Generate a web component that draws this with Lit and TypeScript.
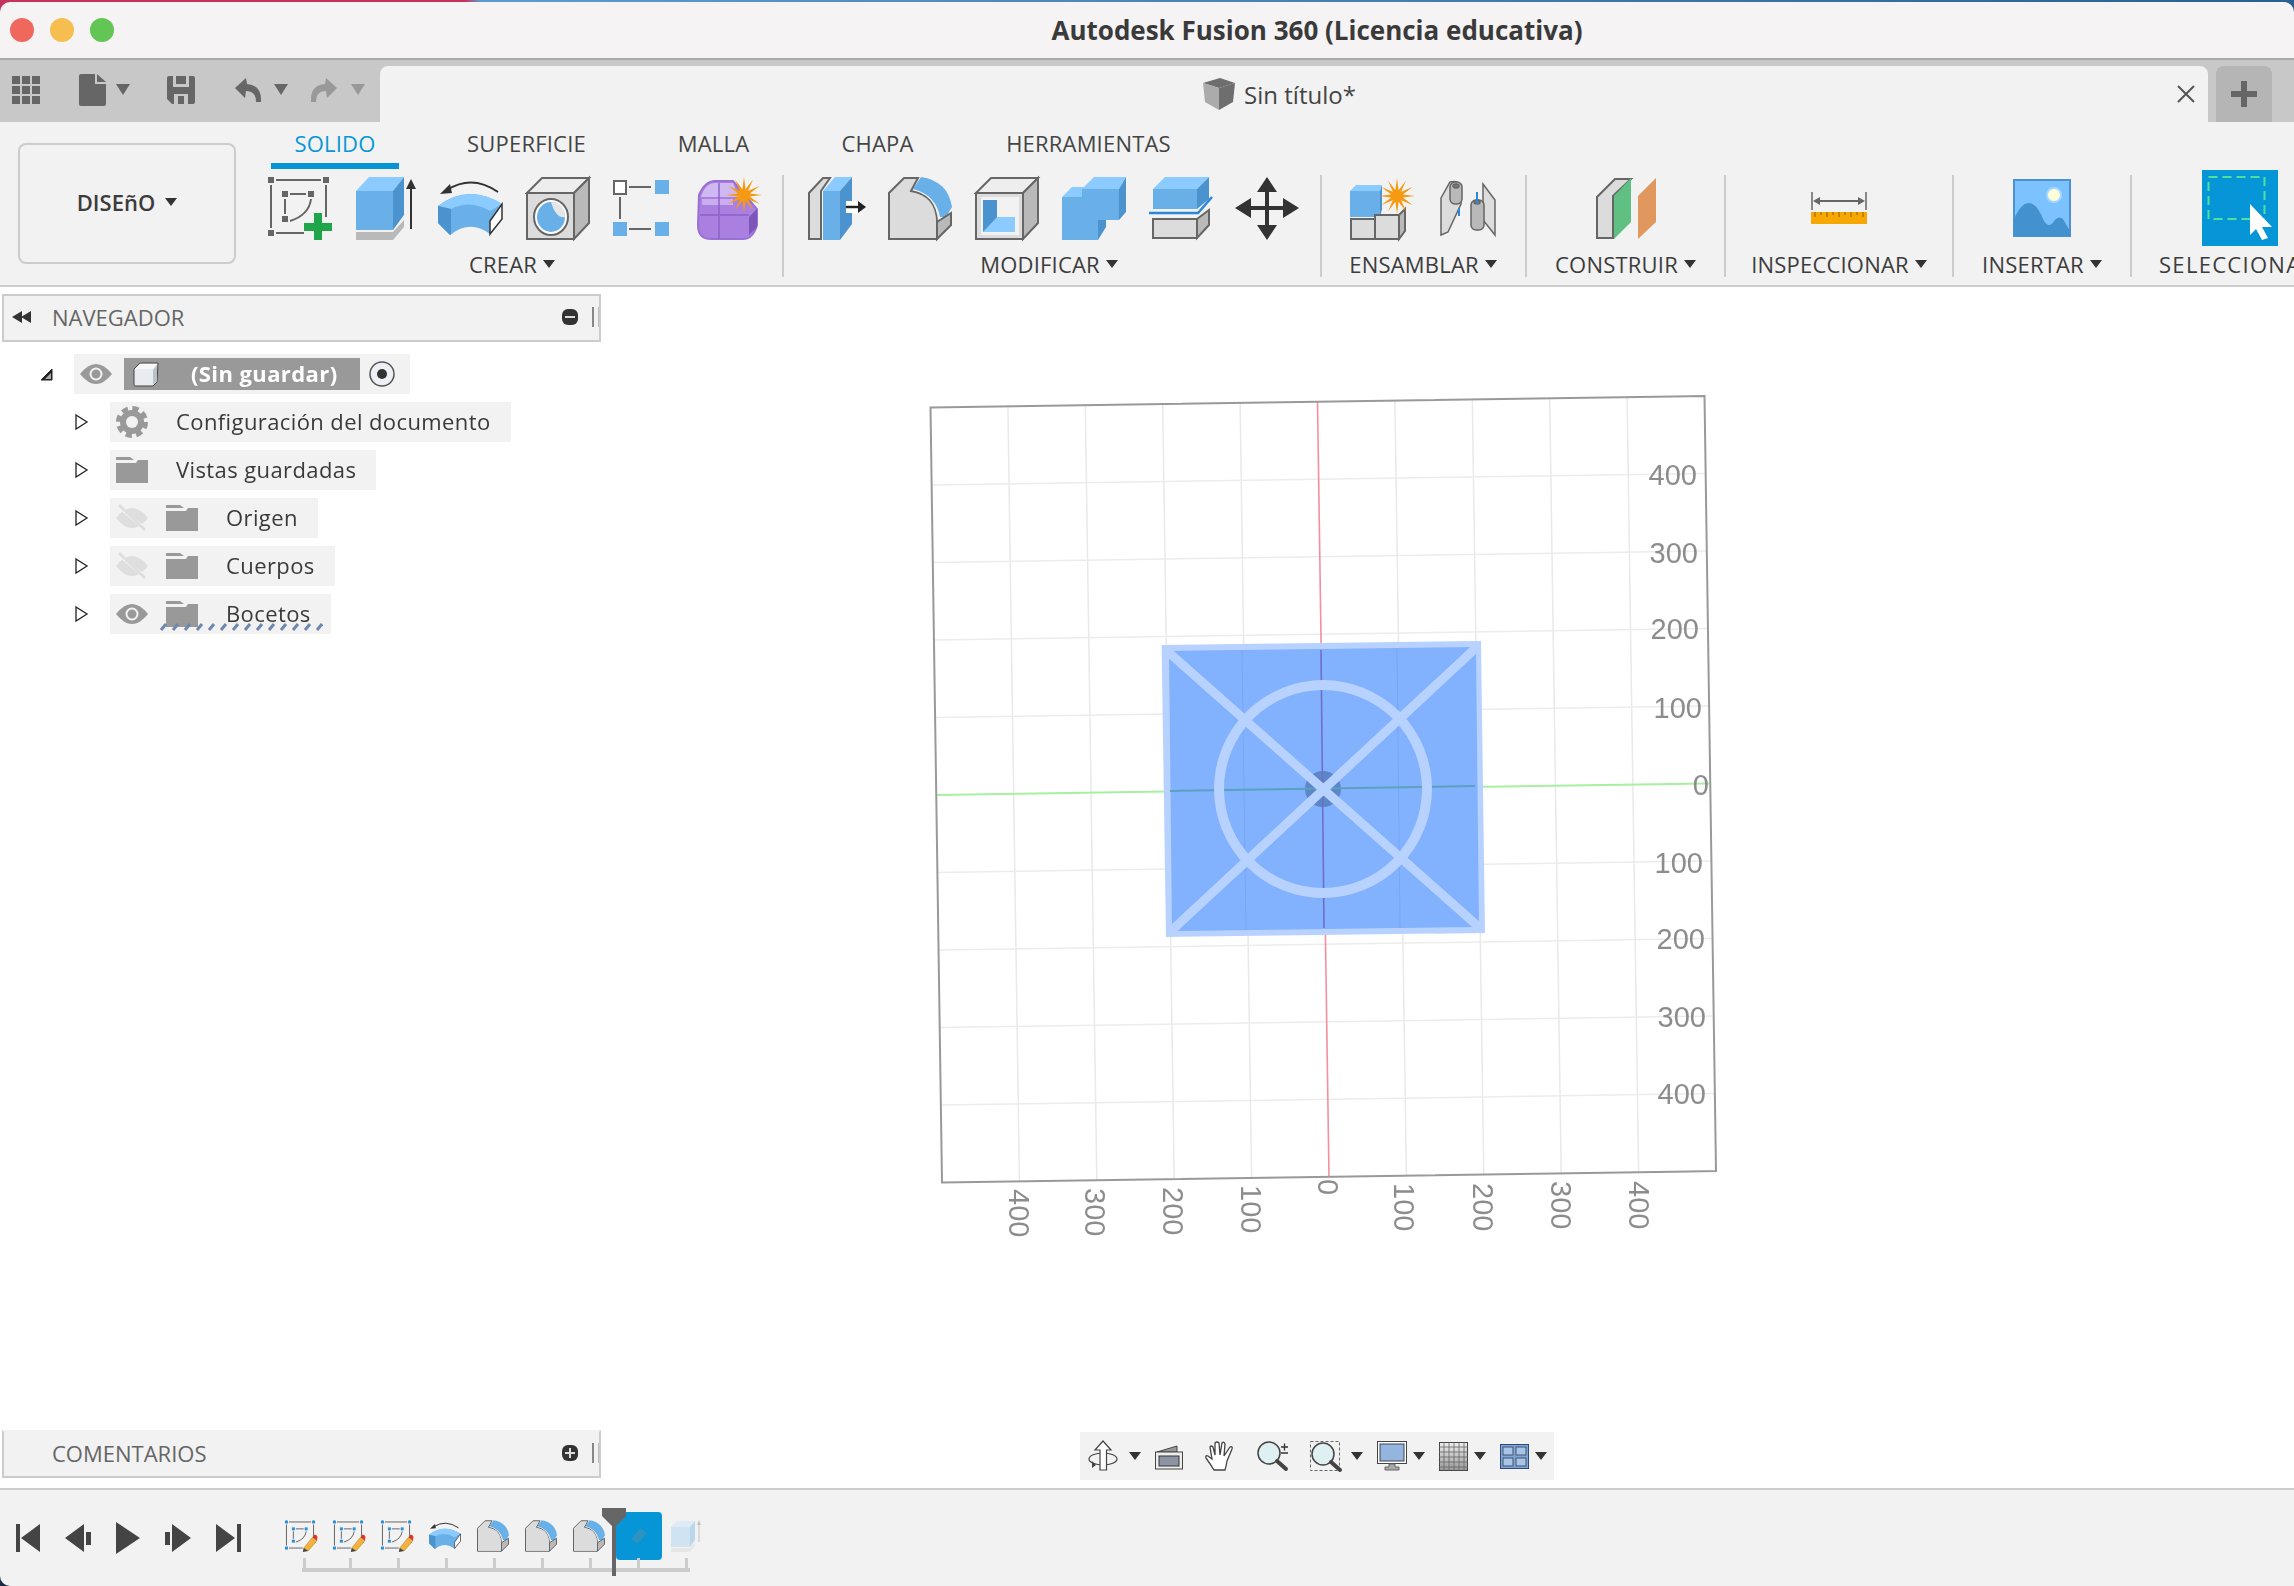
import { LitElement, html, css, svg, TemplateResult } from 'lit';
import { customElement } from 'lit/decorators.js';

type Icon = { w: number; h: number; body: unknown };

const BLUE_TOP = '#8ccbff';
const BLUE_MID = '#6ab0e8';
const BLUE_DARK = '#4a93cf';
const GRAY_FRONT = '#dcdcdc';
const GRAY_SIDE = '#b9b9b9';
const LINE = '#666';

function star(cx: number, cy: number, r1: number, r2: number, n: number) {
  const pts: string[] = [];
  for (let i = 0; i < n * 2; i++) {
    const r = i % 2 ? r2 : r1;
    const a = (Math.PI * i) / n - Math.PI / 2;
    pts.push(`${(cx + r * Math.cos(a)).toFixed(1)},${(cy + r * Math.sin(a)).toFixed(1)}`);
  }
  return pts.join(' ');
}

function ico(i: Icon, w = i.w, h = i.h): TemplateResult {
  return html`<svg class="ico" width=${w} height=${h} viewBox="0 0 ${i.w} ${i.h}">${i.body}</svg>`;
}

const sketchFrame = (hc: string) => svg`
  <g fill=${hc}>
    <rect x="0" y="0" width="6" height="6"/><rect x="55" y="0" width="6" height="6"/>
    <rect x="0" y="53" width="6" height="6"/><rect x="14" y="14" width="6" height="6"/>
    <rect x="40" y="14" width="6" height="6"/><rect x="14" y="39" width="6" height="6"/>
  </g>
  <g fill="none" stroke=${LINE} stroke-width="2">
    <path d="M8 3H53M3 8V51M58 8V40M8 56H36M22 17H38M17 22V37M43 22Q41 38 22 44"/>
  </g>`;

const sketch: Icon = {
  w: 65, h: 63,
  body: svg`${sketchFrame(LINE)}<path fill="#1fa64a" d="M46 36H54V46H64V54H54V63H46V54H36V46H46Z"/>`,
};

const sketchEdit: Icon = {
  w: 65, h: 63,
  body: svg`${sketchFrame('#2c8fd8')}
    <path fill="#f2b23e" stroke="#a87a20" stroke-width="1" d="M38 56L56 34L65 41L47 62Z"/>
    <path fill="#e0352b" d="M56 34L60 29Q64 28 66 33L65 41Z"/>
    <path fill="#444" d="M38 56L47 62L36 64Z"/>`,
};

const extrude: Icon = {
  w: 60, h: 63,
  body: svg`
    <path fill=${BLUE_TOP} d="M0 14L13 0H48L37 14Z"/>
    <rect fill=${BLUE_MID} x="0" y="14" width="37" height="39"/>
    <path fill=${BLUE_DARK} d="M37 14L48 0V38L37 53Z"/>
    <path fill=${GRAY_SIDE} d="M0 55H37L48 43V50L37 63H0Z"/>
    <path fill="none" stroke="#333" stroke-width="2" d="M55 52V8"/>
    <path fill="#333" d="M55 2L60 12H50Z"/>`,
};

const revolve: Icon = {
  w: 65, h: 55,
  body: svg`
    <path fill=${BLUE_MID} d="M0 25Q30 2 64 23L52 40V53Q32 38 12 54L0 42Z"/>
    <path fill=${BLUE_TOP} d="M0 25Q32 2 64 23L52 30Q32 18 13 28Z"/>
    <path fill=${BLUE_DARK} d="M0 25L13 28V54L12 54L0 42Z"/>
    <path fill="#fff" stroke="#333" stroke-width="1.5" d="M52 40L64 23V38L52 53Z"/>
    <path fill="none" stroke="#333" stroke-width="2" d="M60 11Q34 -7 9 9"/>
    <path fill="#333" d="M2 13L12 3L14 12Z"/>`,
};

const grayBox = svg`
  <path fill=${GRAY_FRONT} stroke=${LINE} stroke-width="2" d="M1 16H48V62H1Z"/>
  <path fill="#eee" stroke=${LINE} stroke-width="2" d="M1 16L16 1H63L48 16Z"/>
  <path fill=${GRAY_SIDE} stroke=${LINE} stroke-width="2" d="M48 16L63 1V46L48 62Z"/>`;

const hole: Icon = {
  w: 65, h: 63,
  body: svg`${grayBox}
    <ellipse cx="25" cy="40" rx="17" ry="18" fill="#fff" stroke=${LINE} stroke-width="2"/>
    <ellipse cx="25" cy="40" rx="14" ry="15" fill=${BLUE_MID}/>
    <path fill="#e6e6e6" d="M25 25Q39 26 39 40Q30 42 25 25Z"/>`,
};

// drawn 56 wide, the spare 5 keeps the spacing of the row
const pattern: Icon = {
  w: 61, h: 56,
  body: svg`
    <rect x="1" y="1" width="12" height="13" fill="#fff" stroke=${LINE} stroke-width="2"/>
    <g fill=${BLUE_MID}><rect x="42" y="0" width="14" height="14"/>
    <rect x="0" y="42" width="14" height="14"/><rect x="42" y="42" width="14" height="14"/></g>
    <path stroke=${LINE} stroke-width="2" d="M16 7H38M7 17V39M16 49H38"/>`,
};

const form: Icon = {
  w: 65, h: 63,
  body: svg`
    <path fill="#a97fe0" stroke="#9a70d4" stroke-width="2" d="M2 18Q8 4 18 4H36L60 32V48Q56 62 46 62H14Q1 62 1 48Z"/>
    <path fill="#d0b8f2" d="M4 20Q8 6 18 6H36L42 20Z"/>
    <path fill="#c9adef" d="M5 22H36V28H5Z"/>
    <path fill="#7d55b8" d="M52 40L60 32V50L52 58Z"/>
    <path fill="none" stroke="#8d63c8" stroke-width="1.5" d="M22 6V62M3 38H52"/>
    <polygon fill="#f59a12" points=${star(47, 18, 18, 6, 12)}/>`,
};

const pressPull: Icon = {
  w: 58, h: 63,
  body: svg`
    <path fill=${GRAY_FRONT} stroke=${LINE} stroke-width="2" d="M1 62V16L15 1H22L13 14V62Z"/>
    <path fill=${BLUE_TOP} d="M15 14L27 0H44L32 14Z"/>
    <rect fill=${BLUE_MID} x="15" y="14" width="17" height="49"/>
    <path fill=${BLUE_DARK} d="M32 14L44 0V47L32 63Z"/>
    <rect x="38" y="24" width="14" height="12" fill="#fff"/>
    <path stroke="#222" stroke-width="2.5" d="M38 30H52"/><path fill="#222" d="M50 24L58 30L50 36Z"/>`,
};

const fillet: Icon = {
  w: 64, h: 63,
  body: svg`
    <path fill=${GRAY_FRONT} stroke=${LINE} stroke-width="2" d="M1 62V16L16 1H30L23 14Q47 18 49 44V62Z"/>
    <path fill=${GRAY_FRONT} d="M2 16H23Q47 18 48 44V61H2Z"/>
    <path fill=${BLUE_MID} d="M33 0Q60 4 64 30L58 40H52Q48 18 25 12Z"/>
    <path fill=${GRAY_SIDE} stroke=${LINE} stroke-width="2" d="M49 62V45L63 36V48Z"/>`,
};

const shell: Icon = {
  w: 65, h: 63,
  body: svg`${grayBox}
    <rect x="6" y="20" width="38" height="38" fill="#f2f2f2"/>
    <rect x="8" y="23" width="14" height="32" fill=${BLUE_DARK}/>
    <path fill=${BLUE_TOP} d="M8 55L22 40H40V55Z"/>`,
};

const combine: Icon = {
  w: 64, h: 63,
  body: svg`
    <path fill=${BLUE_TOP} d="M0 20L10 10H26L20 20Z"/><path fill=${BLUE_TOP} d="M20 12L32 0H64L57 12Z"/>
    <rect fill=${BLUE_MID} x="20" y="12" width="37" height="31"/>
    <rect fill=${BLUE_MID} x="0" y="20" width="36" height="43"/>
    <path fill=${BLUE_DARK} d="M57 12L64 0V35L57 43ZM36 43H44V50L36 63Z"/>`,
};

const split: Icon = {
  w: 64, h: 62,
  body: svg`
    <path fill=${BLUE_TOP} d="M4 12L16 0H60L48 12Z"/>
    <rect fill=${BLUE_MID} x="4" y="12" width="44" height="20"/>
    <path fill=${BLUE_DARK} d="M48 12L60 0V22L48 32Z"/>
    <path fill="none" stroke="#2b88d8" stroke-width="2.5" d="M0 36H49L63 20"/>
    <rect x="4" y="42" width="44" height="19" fill=${GRAY_FRONT} stroke=${LINE} stroke-width="2"/>
    <path fill=${GRAY_SIDE} stroke=${LINE} stroke-width="2" d="M48 42L60 33V48L48 61Z"/>`,
};

const move: Icon = {
  w: 64, h: 63,
  body: svg`
    <g fill="#333">
      <path d="M32 0L42 15H22ZM32 63L42 48H22ZM0 31L16 21V41ZM64 31L48 21V41Z"/>
      <rect x="30" y="12" width="4" height="38"/><rect x="13" y="29" width="38" height="4"/>
    </g>`,
};

const assemble: Icon = {
  w: 64, h: 63,
  body: svg`
    <path fill=${BLUE_TOP} d="M0 14L6 8H32L30 14Z"/>
    <rect fill=${BLUE_MID} x="0" y="14" width="30" height="26"/>
    <path fill=${BLUE_DARK} d="M30 14L32 8V32L30 40Z"/>
    <g stroke=${LINE} stroke-width="2">
      <rect x="1" y="42" width="24" height="20" fill=${GRAY_FRONT}/>
      <rect x="25" y="38" width="24" height="24" fill=${GRAY_FRONT}/>
      <path fill=${GRAY_SIDE} d="M49 38L55 32V54L49 62Z"/>
    </g>
    <polygon fill="#f59a12" points=${star(47, 19, 18, 6, 12)}/>`,
};

const joint: Icon = {
  w: 56, h: 56,
  body: svg`
    <g stroke=${LINE} stroke-width="1.5">
      <path fill=${GRAY_FRONT} d="M1 18L10 2Q18 0 21 6V24L8 52L1 55Z"/>
      <rect x="10" y="2" width="12" height="22" rx="5" fill=${GRAY_SIDE}/>
      <ellipse cx="16" cy="6" rx="3" ry="2" fill="#777"/>
      <path fill=${GRAY_FRONT} d="M43 4L55 20V55L43 40Z"/>
      <rect x="31" y="20" width="13" height="30" rx="5" fill=${GRAY_SIDE}/>
      <ellipse cx="37" cy="22" rx="3" ry="2" fill="#777"/>
    </g>
    <path stroke="#2b88d8" stroke-width="2" d="M37 12V24M19 28V36"/>`,
};

const construct: Icon = {
  w: 60, h: 61,
  body: svg`
    <path fill=${GRAY_FRONT} stroke=${LINE} stroke-width="2" d="M1 60V19L19 1H35L17 18V60Z"/>
    <path fill="#5fc082" d="M18 18L35 0V44L18 61Z"/>
    <path fill="#e0985f" d="M42 18L60 0V44L42 61Z"/>`,
};

const inspect: Icon = {
  w: 56, h: 32,
  body: svg`
    <path stroke=${LINE} stroke-width="1.5" d="M1 0V18M55 0V18"/>
    <path stroke=${LINE} stroke-width="2" d="M6 9H50"/>
    <path fill=${LINE} d="M2 9L9 5V13ZM54 9L47 5V13Z"/>
    <rect y="20" width="56" height="12" fill="#f7a800"/>
    <path stroke="#8a6000" stroke-width="1" d="M4 20V25M10 20V23M16 20V25M22 20V23M28 20V25M34 20V23M40 20V25M46 20V23M52 20V25"/>`,
};

const insert: Icon = {
  w: 58, h: 58,
  body: svg`
    <rect x="1" y="1" width="56" height="56" fill="#7cc2ff" stroke=${BLUE_DARK} stroke-width="2"/>
    <ellipse cx="41" cy="16" rx="7" ry="7" fill="#fdfdd8" stroke="#a8d8ff" stroke-width="2"/>
    <path fill="#4392cf" d="M1 40Q8 24 16 24Q24 24 31 42Q36 50 41 42Q46 36 50 40L57 52V57H1Z"/>`,
};

const select: Icon = {
  w: 76, h: 76,
  body: svg`
    <rect width="76" height="76" fill="#0696d7"/>
    <rect x="6.5" y="7" width="56" height="42" fill="none" stroke="#4fe0a0" stroke-width="2" stroke-dasharray="9 5"/>
    <path fill="#fff" d="M48 34L70 57L60 57L66 68L60 70L54 59L48 65Z"/>`,
};

const ghost: Icon = {
  w: 30, h: 32,
  body: svg`
    <path fill="#dcebf5" d="M0 7L6 1H24L19 7Z"/><rect fill="#cfe3f2" y="7" width="19" height="20"/>
    <path fill="#b9d6ea" d="M19 7L24 1V20L19 27Z"/><path fill="#e6e6e6" d="M0 28H19L24 22V26L19 32H0Z"/>
    <path stroke="#c4c4c4" stroke-width="1" d="M28 22V3"/><path fill="#c4c4c4" d="M28 0L30 5H26Z"/>`,
};

const gridApp: Icon = {
  w: 28, h: 28,
  body: svg`<g fill="#666">
    ${[0, 10, 20].map((y) => [0, 10, 20].map((x) => svg`<rect x=${x} y=${y} width="8" height="8"/>`))}
  </g>`,
};

const fileIcon: Icon = { w: 27, h: 32, body: svg`<path fill="#666" d="M2 0H16V10H27V30Q27 32 25 32H2Q0 32 0 30V2Q0 0 2 0ZM18 0L27 8H18Z"/>` };

const saveIcon: Icon = {
  w: 28, h: 28,
  body: svg`<path fill="#666" d="M2 0H26Q28 0 28 2V26Q28 28 26 28H5L0 23V2Q0 0 2 0Z"/>
    <path fill="#c8c8c8" d="M6 0H22V11H6ZM7 18H21V28H7Z"/><path fill="#666" d="M9 0H19V8H9ZM11 20H17V28H11Z"/>`,
};

const undoIcon: Icon = {
  w: 26, h: 24,
  body: svg`<path fill="#666" d="M11 0L0 10L10 20L11 13Q21 13 21 24H26Q27 7 12 6Z"/>`,
};

const redoIcon: Icon = {
  w: 26, h: 24,
  body: svg`<path fill="#999" d="M15 0L26 10L16 20L15 13Q5 13 5 24H0Q-1 7 14 6Z"/>`,
};

const docCube: Icon = {
  w: 32, h: 32,
  body: svg`<path fill="#6e6e6e" d="M0 5L17 0L32 5L16 10Z"/><path fill="#ababab" d="M0 5L16 10V32L2 24Z"/>
    <path fill="#6e6e6e" d="M32 5L16 10V32L30 24Z"/>`,
};

const eye = (c: string, off = false): Icon => ({
  w: 32, h: 20,
  body: svg`
    <path fill=${c} d="M0 10Q16 -10 32 10Q16 30 0 10Z"/>
    ${off
      ? svg`<path stroke="#f2f2f2" stroke-width="3" d="M4 0L28 20"/><path stroke=${c} stroke-width="2.5" d="M3 -3L29 22"/>`
      : svg`<circle cx="16" cy="10" r="5.5" fill="none" stroke="#f2f2f2" stroke-width="2"/>`}`,
});

const cube: Icon = {
  w: 26, h: 24,
  body: svg`<path fill="#e8ecf2" stroke="#444" stroke-width="1" d="M1 7L7 1H25L24 20L20 24H2Q1 24 1 22Z"/>
    <path fill="#f8f8f8" d="M2 7L7 2H24L20 7Z"/><path fill="#bcc0c8" d="M20 8L24 3V19L20 23Z"/>`,
};

const gear: Icon = {
  w: 32, h: 32,
  body: svg`<circle cx="16" cy="16" r="12" fill="#999"/>
    <circle cx="16" cy="16" r="13" fill="none" stroke="#999" stroke-width="6" stroke-dasharray="6 4.2"/>
    <circle cx="16" cy="16" r="6" fill="#f2f2f2"/>`,
};

const folder: Icon = {
  w: 32, h: 26,
  body: svg`<path fill="#999" d="M0 0H14L18 3H0ZM0 6H20L22 3H32V26H0Z"/>`,
};

const radio: Icon = {
  w: 26, h: 26,
  body: svg`<circle cx="13" cy="13" r="12" fill="#eef0f6" stroke="#555" stroke-width="1.5"/><circle cx="13" cy="13" r="5" fill="#333"/>`,
};

const triOpen: Icon = { w: 13, h: 13, body: svg`<path fill="#222" stroke="#222" d="M1 12L12 1V12Z"/><path fill="#aaa" d="M5 11L11 5V11Z"/>` };
const triClosed: Icon = { w: 13, h: 16, body: svg`<path fill="#fff" stroke="#222" stroke-width="1.3" d="M1 1L12 8L1 15Z"/>` };

const rewind: Icon = { w: 19, h: 12, body: svg`<path fill="#333" d="M0 6L10 0V12ZM9 6L19 0V12Z"/>` };

const orbit: Icon = {
  w: 30, h: 30,
  body: svg`
    <ellipse cx="15" cy="18" rx="14" ry="6" fill="none" stroke="#444" stroke-width="1.2"/>
    <path fill="#fff" stroke="#444" stroke-width="1.2" d="M15 0L23 9H18.5V29H12V9H7Z"/>
    <path fill="#444" d="M4 20L8 24L4 27Z"/>`,
};

const look: Icon = {
  w: 28, h: 27,
  body: svg`
    <path fill="#999" stroke="#444" d="M2 9L22 3V9Z"/>
    <rect x="0.5" y="9" width="27" height="17" fill="#eee" stroke="#444"/>
    <rect x="4" y="13" width="20" height="10" fill="#8c94a4" stroke="#333"/>`,
};

const hand: Icon = {
  w: 30, h: 30,
  body: svg`<path fill="#fff" stroke="#444" stroke-width="1.3" d="M9 29Q6 24 1 17Q0 14 3 15L7 18L5 6Q6 4 8 6L10 14L10 2Q12 0 14 2L15 14L17 2Q19 0 20 3L19 15L25 6Q28 5 27 8L22 20Q21 26 20 29Z"/>`,
};

const lens = svg`<circle cx="12" cy="12" r="11" fill="#dff0f2" stroke="#444" stroke-width="1.5"/>
  <path stroke="#444" stroke-width="4" stroke-linecap="round" d="M20 20L29 28"/>`;

const zoom: Icon = {
  w: 31, h: 30,
  body: svg`${lens}<path stroke="#333" stroke-width="1.3" d="M24 6H31M27.5 2.5V9.5M24 12H31"/>`,
};

const fit: Icon = {
  w: 30, h: 30,
  body: svg`<rect x="0.5" y="0.5" width="29" height="29" fill="none" stroke="#666" stroke-dasharray="3 2"/>
    <g transform="translate(1 1)">${lens}</g>`,
};

const display: Icon = {
  w: 30, h: 30,
  body: svg`<rect x="0.5" y="0.5" width="29" height="22" fill="#fff" stroke="#444"/>
    <rect x="3" y="3" width="24" height="17" fill="#93b5de" stroke="#445"/>
    <path fill="#aaa" stroke="#666" d="M12 23H18V26H22V29H8V26H12Z"/>`,
};

const gridTool: Icon = {
  w: 29, h: 29,
  body: svg`<defs><linearGradient id="gt" x2="0" y2="1"><stop offset="0" stop-color="#eee"/><stop offset="1" stop-color="#999"/></linearGradient></defs>
    <rect x="0.5" y="0.5" width="28" height="28" fill="url(#gt)" stroke="#444"/>
    <path stroke="#666" stroke-width="0.8" d="M5 0V29M10 0V29M15 0V29M20 0V29M25 0V29M0 5H29M0 10H29M0 15H29M0 20H29M0 25H29"/>`,
};

const panes: Icon = {
  w: 29, h: 25,
  body: svg`<rect x="0.5" y="0.5" width="28" height="24" fill="#7fa6d8" stroke="#2d4a7a"/>
    <rect x="3" y="3" width="10" height="8" fill="#a8c4e8" stroke="#456"/><rect x="16" y="3" width="10" height="8" fill="#a8c4e8" stroke="#456"/>
    <rect x="3" y="14" width="10" height="8" fill="#a8c4e8" stroke="#456"/><rect x="16" y="14" width="10" height="8" fill="#a8c4e8" stroke="#456"/>`,
};

const prevEnd: Icon = { w: 24, h: 28, body: svg`<path fill="#444" d="M0 0H4V28H0ZM24 0V28L5 14Z"/>` };
const prevStep: Icon = { w: 26, h: 28, body: svg`<path fill="#444" d="M19 0V28L0 14ZM21 8H26V21H21Z"/>` };
const playIcon: Icon = { w: 24, h: 32, body: svg`<path fill="#444" d="M0 0L24 16L0 32Z"/>` };
const nextStep: Icon = { w: 26, h: 28, body: svg`<path fill="#444" d="M7 0V28L26 14ZM0 8H5V21H0Z"/>` };
const nextEnd: Icon = { w: 25, h: 28, body: svg`<path fill="#444" d="M0 0V28L19 14ZM21 0H25V28H21Z"/>` };

const tools = [
  {
    cls: 'crear', label: 'CREAR',
    icons: [sketch, extrude, revolve, hole, pattern, form],
  },
  {
    cls: 'modificar', label: 'MODIFICAR',
    icons: [pressPull, fillet, shell, combine, split, move],
  },
  { cls: 'ensamblar', label: 'ENSAMBLAR', icons: [assemble, joint] },
  { cls: 'construir', label: 'CONSTRUIR', icons: [construct] },
  { cls: 'inspeccionar', label: 'INSPECCIONAR', icons: [inspect] },
  { cls: 'insertar', label: 'INSERTAR', icons: [insert] },
  { cls: 'seleccionar', label: 'SELECCIONAR', icons: [select] },
];

const timeline = [sketchEdit, sketchEdit, sketchEdit, revolve, fillet, fillet, fillet];

// model space of the tilted sketch view, one cell is 100 units
const gp = (u: number, v: number) => [930.5 + 77.4 * u + 1.15 * v, 407.5 - 1.15 * u + 77.5 * v];
const gline = (a: number[], b: number[], color: string, w = 1.5) =>
  svg`<line x1=${a[0]} y1=${a[1]} x2=${b[0]} y2=${b[1]} stroke=${color} stroke-width=${w}/>`;

const rightLabels: [string, number, number][] = [
  ['400', 1697, 474], ['300', 1698, 552], ['200', 1699, 628], ['100', 1702, 707], ['0', 1709, 784],
  ['100', 1703, 862], ['200', 1705, 938], ['300', 1706, 1016], ['400', 1706, 1093],
];
const bottomLabels: [string, number, number][] = [
  ['400', 1020, 1189], ['300', 1096, 1188], ['200', 1174, 1187], ['100', 1252, 1185], ['0', 1329, 1179],
  ['100', 1405, 1183], ['200', 1484, 1183], ['300', 1562, 1181], ['400', 1640, 1181],
];

function viewport() {
  const cells = [1, 2, 3, 4, 6, 7, 8, 9];
  return svg`
    <g filter="url(#soft)">
      ${cells.map((i) => gline(gp(i, 0), gp(i, 10), '#e9e9e9'))}
      ${cells.map((i) => gline(gp(0, i), gp(10, i), '#ececec'))}
      ${gline(gp(0, 5), gp(10, 5), '#a6f0a0', 2)}
      ${gline(gp(5, 0), gp(5, 10), '#f58fa0', 1.6)}
      <polygon fill="#b8d2ff" points="1161.6,645 1481,641 1485,933 1166,937"/>
      <polygon fill="#82b1fd" points="1169,651 1476,647 1479,927 1172,931"/>
      ${gline([1242, 650], [1246, 930], '#78a7f2', 1)}
      ${gline([1397, 648], [1400, 928], '#78a7f2', 1)}
      <circle cx="1323" cy="789" r="18" fill="#5c86c8"/>
      ${gline([1170, 791], [1475, 786], '#5aa0c0', 2)}
      ${gline([1321, 650], [1324, 928], '#6f6ec8', 1.6)}
      <path fill="none" stroke="#b8d2ff" stroke-width="9" d="M1166 650L1480 928M1478 646L1170 932"/>
      <circle cx="1323" cy="789" r="104" fill="none" stroke="#b8d2ff" stroke-width="10"/>
      <polygon fill="none" stroke="#999" stroke-width="2" points="930.5,407.5 1704.5,396 1716,1171 942,1182.5"/>
      <g class="axis">
        ${rightLabels.map(([t, x, y]) => svg`<text x=${x} y=${y + 10.5} text-anchor="end">${t}</text>`)}
        ${bottomLabels.map(([t, x, y]) => svg`<text transform="translate(${x - 11} ${y}) rotate(90)">${t}</text>`)}
      </g>
    </g>`;
}

@customElement('app-root')
export class AppRoot extends LitElement {
  static styles = css`
    :host {
      display: block;
      width: 2294px;
      height: 1586px;
      overflow: hidden;
      background: #1b2a44;
      font-family: 'Open Sans', 'Liberation Sans', sans-serif;
      color: #333;
      position: relative;
    }

    .ico {
      display: block;
      flex: none;
      overflow: visible;
    }

    .top {
      padding-top: 2px;
      background: linear-gradient(90deg, #c4325e 0, #c4325e 465px, #5f9bcd 480px, #2a6090 100%);
    }

    .titlebar {
      height: 56px;
      background: #f5f3f4;
      border-top-left-radius: 10px;
      border-top-right-radius: 10px;
      border-bottom: 2px solid #a9a9a9;
      display: flex;
      align-items: center;
      justify-content: center;
      position: relative;
      padding-left: 340px;
      font-size: 26px;
      font-weight: 700;
      color: #3a3a3a;
    }

    .lights {
      position: absolute;
      left: 10px;
      top: 16px;
      display: flex;
      gap: 16px;
    }

    .lights span {
      width: 24px;
      height: 24px;
      border-radius: 50%;
    }

    .red { background: #f0675e; }
    .yellow { background: #f6bd4f; }
    .green { background: #62c554; }

    .tabstrip {
      height: 62px;
      background: #c8c8c8;
      display: flex;
      align-items: flex-end;
      box-sizing: border-box;
    }

    .quick {
      width: 380px;
      height: 62px;
      flex: none;
      display: flex;
      align-items: center;
      padding-left: 12px;
      box-sizing: border-box;
      padding-bottom: 3px;
    }

    .quick .grid-btn { margin-right: 39px; }
    .quick .caret-q { margin: 0 37px 0 10px; }
    .quick .save-btn { margin-right: 40px; }
    .quick .caret-q.undo-cap { margin: 0 23px 0 13px; }
    .quick .caret-q.redo-cap { margin: 0 0 0 14px; }

    .caret-q {
      width: 0;
      height: 0;
      border-left: 7.5px solid transparent;
      border-right: 7.5px solid transparent;
      border-top: 11px solid #666;
      flex: none;
    }

    .caret-q.redo-cap { border-top-color: #999; }

    .doc-tab {
      width: 1828px;
      height: 56px;
      background: #f2f2f2;
      border-radius: 8px 8px 0 0;
      display: flex;
      align-items: center;
      justify-content: center;
      position: relative;
      font-size: 24px;
      color: #444;
      gap: 9px;
      padding-right: 29px;
      box-sizing: border-box;
    }

    .close {
      position: absolute;
      right: 13px;
      top: 19px;
      width: 18px;
      height: 18px;
    }

    .plus-tab {
      width: 56px;
      height: 56px;
      margin-left: 8px;
      border-radius: 8px 8px 0 0;
      background: #b5b5b5;
      display: flex;
      align-items: center;
      justify-content: center;
    }

    .ribbon {
      height: 163px;
      background: #f2f2f2;
      border-bottom: 2px solid #ccc;
      display: flex;
      overflow: hidden;
    }

    .design {
      flex: none;
      box-sizing: border-box;
      width: 218px;
      height: 121px;
      margin: 21px 26px 0 18px;
      padding-bottom: 3px;
      border: 2px solid #ccc;
      border-radius: 8px;
      display: flex;
      align-items: center;
      justify-content: center;
      gap: 10px;
      font-size: 22px;
      font-weight: 600;
      color: #3c3c3c;
    }

    .caret {
      width: 0;
      height: 0;
      border-left: 6px solid transparent;
      border-right: 6px solid transparent;
      border-top: 8px solid #333;
      flex: none;
    }

    .ribbon-main {
      display: flex;
      flex-direction: column;
      flex: none;
    }

    .tabs {
      display: flex;
      gap: 45px;
      height: 47px;
      margin: 0 0 6px 9px;
      font-size: 22px;
      letter-spacing: 0.2px;
      color: #444;
    }

    .tabs div {
      box-sizing: border-box;
      height: 47px;
      padding-top: 6px;
      text-align: center;
      line-height: 30px;
    }

    .tabs div:nth-child(1) { width: 128px; }
    .tabs div:nth-child(2) { width: 165px; }
    .tabs div:nth-child(3) { width: 119px; }
    .tabs div:nth-child(4) { width: 119px; }
    .tabs div:nth-child(5) { width: 213px; }

    .tabs .active {
      color: #0696d7;
      border-bottom: 6px solid #0696d7;
    }

    .tools {
      display: flex;
      height: 102px;
    }

    .group {
      flex: none;
      box-sizing: border-box;
      height: 102px;
      display: flex;
      flex-direction: column;
      justify-content: space-between;
      border-right: 2px solid #ccc;
      padding-top: 1px;
    }

    .group .icons {
      height: 64px;
      display: flex;
      align-items: center;
      justify-content: space-between;
    }

    .group.single .icons { justify-content: center; }

    .group .label {
      height: 24px;
      padding-bottom: 1px;
      display: flex;
      align-items: center;
      justify-content: center;
      gap: 6px;
      font-size: 22px;
      letter-spacing: 0.2px;
      color: #3c3c3c;
      white-space: nowrap;
    }

    .crear { width: 522px; padding: 1px 20px 0 6px; }
    .crear .label { padding-right: 6px; }
    .modificar { width: 538px; padding: 1px 21px 0 24px; }
    .modificar .label { padding-right: 9px; }
    .ensamblar { width: 205px; padding: 1px 29px 0 28px; }
    .construir { width: 199px; }
    .inspeccionar { width: 228px; }
    .insertar { width: 178px; }
    .seleccionar { width: 216px; border-right: none; }

    .group.seleccionar .label {
      justify-content: flex-start;
      padding-left: 27px;
      letter-spacing: 1.3px;
    }

    .canvas {
      position: relative;
      height: 1201px;
      background: #fff;
      display: flex;
      flex-direction: column;
      justify-content: space-between;
      padding: 7px 0 10px 2px;
      box-sizing: border-box;
    }

    .view3d {
      position: absolute;
      left: 0;
      top: 0;
    }

    .axis text {
      font-family: 'Liberation Sans', sans-serif;
      font-size: 29px;
      fill: #8c8c8c;
    }

    .nav-panel { position: relative; }

    .panel-head {
      position: relative;
      box-sizing: border-box;
      width: 599px;
      height: 48px;
      background: #f2f2f2;
      border: 2px solid #ccc;
      display: flex;
      align-items: center;
      font-size: 22px;
      color: #666;
      padding: 0 0 2px 8px;
    }

    .panel-head.comments { border-top-color: #f2f2f2; }

    .panel-head .name {
      flex: 1;
      margin-left: 21px;
    }

    .panel-head.comments .name { margin-left: 40px; }

    .badge {
      width: 16px;
      height: 16px;
      border-radius: 6px;
      background: #333;
      margin-right: 14px;
      display: flex;
      align-items: center;
      justify-content: center;
    }

    .grip {
      width: 4px;
      height: 20px;
      border-left: 2px solid #888;
      border-right: 1px solid #bbb;
    }

    .tree {
      display: flex;
      flex-direction: column;
      gap: 8px;
      margin: 12px 0 0 38px;
      font-size: 22px;
      letter-spacing: 0.4px;
      color: #3a3a3a;
    }

    .node {
      display: flex;
      align-items: center;
      height: 40px;
      margin-left: 35px;
    }

    .node.root { margin-left: 0; }

    .node > .ico:first-child { margin-right: 22px; }
    .node.root > .ico:first-child { margin-right: 21px; }

    .pill {
      height: 40px;
      background: #f2f2f2;
      display: flex;
      align-items: center;
      padding: 0 20px 0 6px;
      position: relative;
      white-space: nowrap;
    }

    .pill .t1 { margin: 0 0 3px 28px; }
    .pill .f1 { margin-left: 18px; }

    .root .pill { padding: 0 15px 0 6px; }

    .sel {
      height: 32px;
      width: 236px;
      margin-left: 12px;
      margin-right: 9px;
      padding-left: 9px;
      box-sizing: border-box;
      background: #999;
      color: #fff;
      font-weight: 700;
      display: flex;
      align-items: center;
      gap: 32px;
    }

    .sel span { padding-bottom: 3px; }

    .wavy {
      position: absolute;
      left: 49px;
      top: 29px;
    }

    .navbar {
      position: absolute;
      left: 1080px;
      top: 1145px;
      box-sizing: border-box;
      width: 474px;
      height: 48px;
      background: #f2f2f2;
      display: flex;
      align-items: center;
      padding-left: 8px;
      gap: 14px;
    }

    .navbar .item {
      display: flex;
      align-items: center;
      gap: 11px;
    }

    .navbar .item.tight { gap: 6px; }
    .navbar .far { margin-left: 8px; }

    .bottom {
      height: 98px;
      background: #f2f2f2;
      border-top: 2px solid #ccc;
      border-bottom-left-radius: 10px;
      display: flex;
      padding: 22px 0 0 16px;
      box-sizing: border-box;
    }

    .controls {
      display: flex;
      gap: 25px;
      align-items: center;
      height: 48px;
      margin-top: 2px;
    }

    .track {
      position: relative;
      margin-left: 44px;
    }

    .steps {
      display: flex;
      align-items: center;
      gap: 16px;
      height: 48px;
    }

    .tile {
      width: 46px;
      height: 48px;
      background: #0696d7;
      border-radius: 4px;
      margin: 0 -7px 0 -5px;
      display: flex;
      align-items: center;
      justify-content: center;
    }

    .tile span {
      width: 8px;
      height: 14px;
      background: #2f93bf;
      transform: rotate(40deg);
      display: block;
    }

    .rail {
      display: block;
      margin: -2px 0 0 17px;
    }

    .marker {
      position: absolute;
      left: 317px;
      top: -4px;
    }
  `;

  private _tree() {
    const kids: [Icon, string][] = [
      [gear, 'Configuración del documento'],
      [folder, 'Vistas guardadas'],
    ];
    const off = eye('#dedede', true);
    const on = eye('#999');
    return html`
      <div class="tree">
        <div class="node root">
          ${ico(triOpen)}
          <div class="pill">
            ${ico(on)}
            <div class="sel">${ico(cube)}<span>(Sin guardar)</span></div>
            ${ico(radio)}
          </div>
        </div>
        ${kids.map(
          ([i, t]) => html`<div class="node">
            ${ico(triClosed)}
            <div class="pill">${ico(i)}<span class="t1">${t}</span></div>
          </div>`
        )}
        <div class="node">
          ${ico(triClosed)}
          <div class="pill">${ico(off)}<span class="f1">${ico(folder)}</span><span class="t1">Origen</span></div>
        </div>
        <div class="node">
          ${ico(triClosed)}
          <div class="pill">${ico(off)}<span class="f1">${ico(folder)}</span><span class="t1">Cuerpos</span></div>
        </div>
        <div class="node">
          ${ico(triClosed)}
          <div class="pill">
            ${ico(on)}<span class="f1">${ico(folder)}</span><span class="t1">Bocetos</span>
            <svg class="wavy" width="164" height="8" viewBox="0 0 164 8">
              ${Array.from({ length: 14 }, (_, i) => svg`<path stroke="#6f86ad" stroke-width="3" d="M${i * 12 + 2} 7L${i * 12 + 7} 1"/>`)}
            </svg>
          </div>
        </div>
      </div>
    `;
  }

  render() {
    return html`
      <div class="top">
        <div class="titlebar">
          <div class="lights"><span class="red"></span><span class="yellow"></span><span class="green"></span></div>
          Autodesk Fusion 360 (Licencia educativa)
        </div>
      </div>
      <div class="tabstrip">
        <div class="quick">
          <span class="grid-btn">${ico(gridApp)}</span>
          ${ico(fileIcon)}<span class="caret-q"></span>
          <span class="save-btn">${ico(saveIcon)}</span>
          ${ico(undoIcon)}<span class="caret-q undo-cap"></span>
          ${ico(redoIcon)}<span class="caret-q redo-cap"></span>
        </div>
        <div class="doc-tab">
          ${ico(docCube)}<span>Sin título*</span>
          <svg class="close" viewBox="0 0 18 18"><path stroke="#555" stroke-width="2" d="M1 1L17 17M17 1L1 17"/></svg>
        </div>
        <div class="plus-tab">
          <svg width="26" height="26" viewBox="0 0 26 26"><path fill="#666" d="M10 0H16V10H26V16H16V26H10V16H0V10H10Z"/></svg>
        </div>
      </div>
      <div class="ribbon">
        <div class="design">DISEñO <span class="caret"></span></div>
        <div class="ribbon-main">
          <div class="tabs">
            <div class="active">SOLIDO</div>
            <div>SUPERFICIE</div>
            <div>MALLA</div>
            <div>CHAPA</div>
            <div>HERRAMIENTAS</div>
          </div>
          <div class="tools">
            ${tools.map(
              (g) => html`<div class="group ${g.cls} ${g.icons.length === 1 ? 'single' : ''}">
                <div class="icons">${g.icons.map((i) => ico(i))}</div>
                <div class="label">${g.label}<span class="caret"></span></div>
              </div>`
            )}
          </div>
        </div>
      </div>
      <div class="canvas">
        <svg class="view3d" width="2294" height="1201" viewBox="0 287 2294 1201">
          <defs><filter id="soft"><feGaussianBlur stdDeviation="0.7"/></filter></defs>
          ${viewport()}
        </svg>
        <div class="nav-panel">
          <div class="panel-head">
            ${ico(rewind)}<span class="name">NAVEGADOR</span>
            <span class="badge"><svg width="10" height="2"><rect width="10" height="2" fill="#ddd"/></svg></span>
            <span class="grip"></span>
          </div>
          ${this._tree()}
        </div>
        <div class="panel-head comments">
          <span class="name">COMENTARIOS</span>
          <span class="badge"><svg width="10" height="10"><path fill="#ddd" d="M4 0H6V4H10V6H6V10H4V6H0V4H4Z"/></svg></span>
          <span class="grip"></span>
        </div>
        <div class="navbar">
          <div class="item">${ico(orbit)}<span class="caret"></span></div>
          ${ico(look)}
          <span class="far">${ico(hand)}</span>
          <span class="far">${ico(zoom)}</span>
          <div class="item far">${ico(fit)}<span class="caret"></span></div>
          <div class="item tight">${ico(display)}<span class="caret"></span></div>
          <div class="item tight">${ico(gridTool)}<span class="caret"></span></div>
          <div class="item tight">${ico(panes)}<span class="caret"></span></div>
        </div>
      </div>
      <div class="bottom">
        <div class="controls">
          ${ico(prevEnd)}${ico(prevStep)}${ico(playIcon)}${ico(nextStep)}${ico(nextEnd)}
        </div>
        <div class="track">
          <div class="steps">
            ${timeline.map((i) => ico(i, 32, 32))}
            <div class="tile"><span></span></div>
            ${ico(ghost)}
          </div>
          <svg class="rail" width="388" height="14" viewBox="0 0 388 14">
            <rect y="10" width="388" height="4" fill="#ccc"/>
            ${[2, 48, 96, 144, 192, 240, 288, 336, 384].map((x) => svg`<rect x=${x - 1} width="3" height="10" fill="#ccc"/>`)}
          </svg>
          <svg class="marker" width="24" height="68" viewBox="0 0 24 68">
            <path fill="#666" d="M0 0H24V8L14 18V68H10V18L0 8Z"/>
          </svg>
        </div>
      </div>
    `;
  }
}
